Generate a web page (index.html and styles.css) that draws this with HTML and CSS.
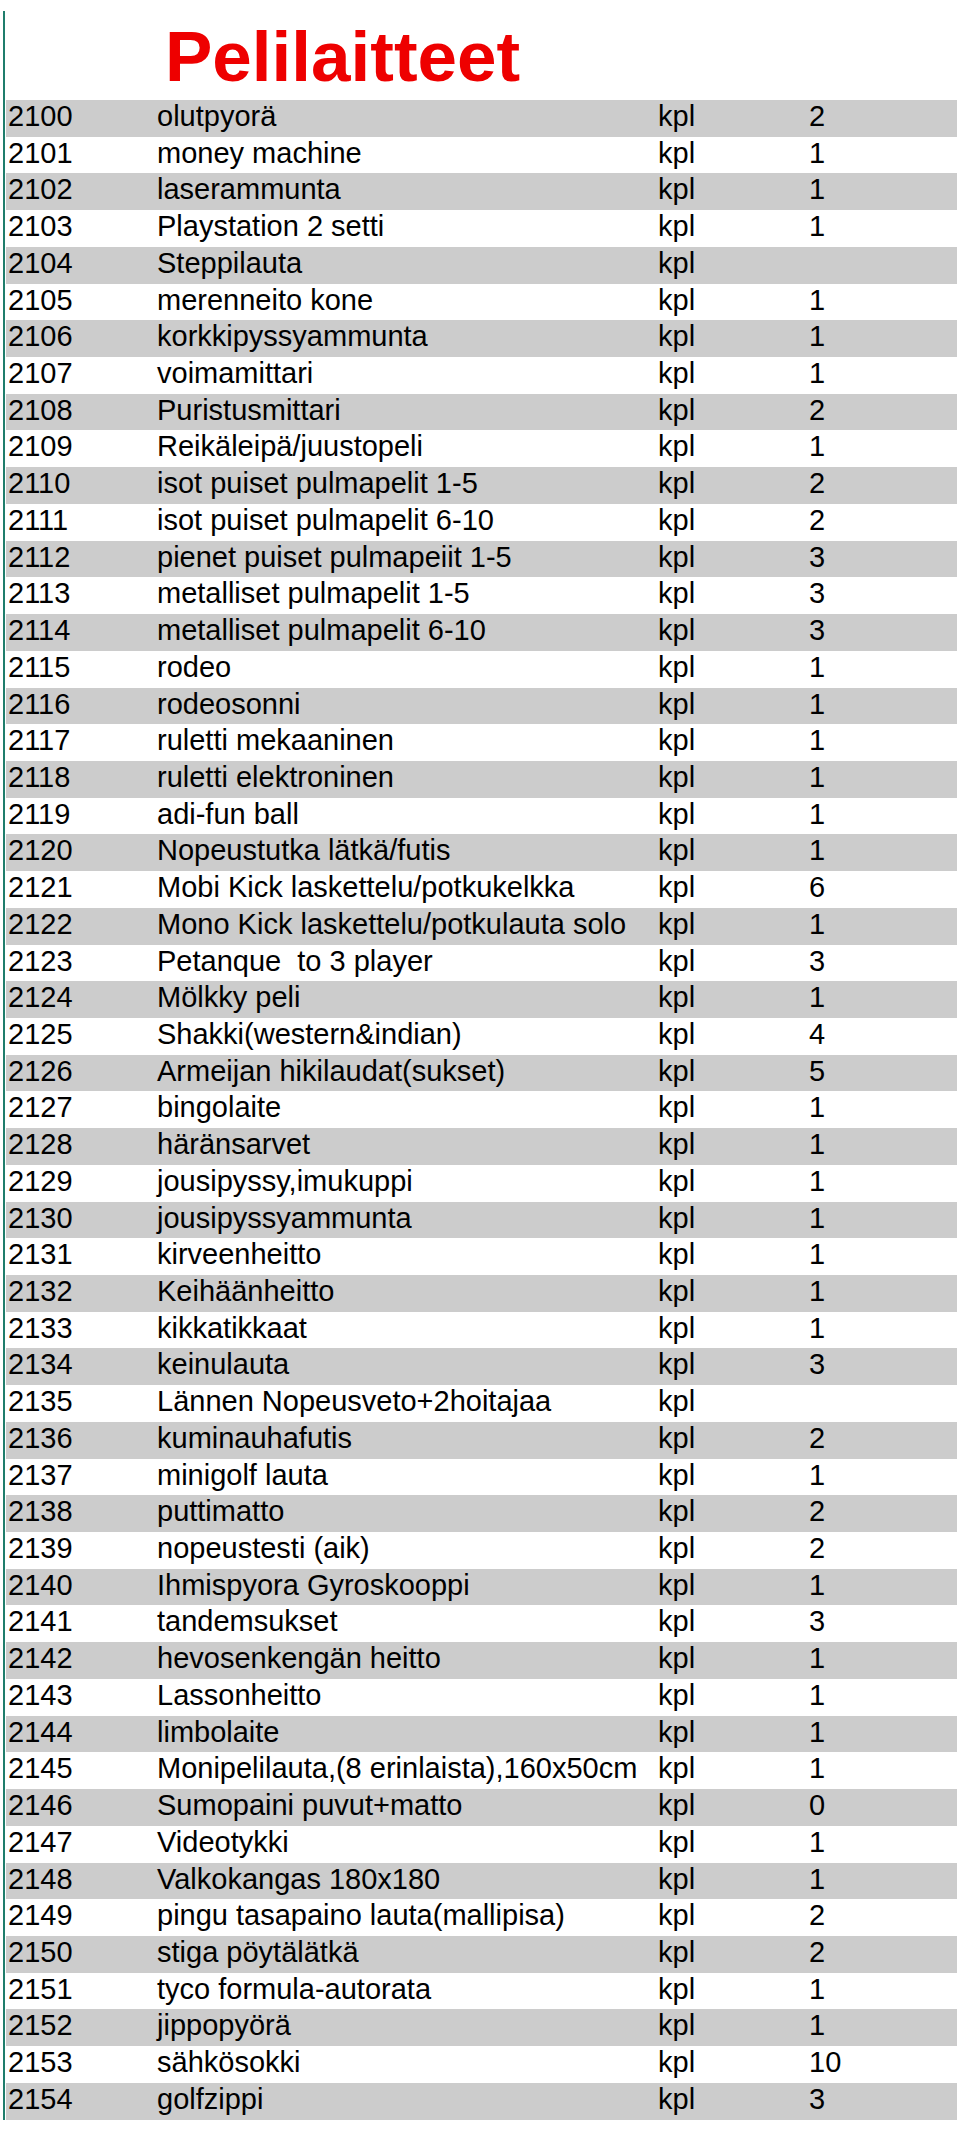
FILE: index.html
```html
<!DOCTYPE html>
<html lang="fi">
<head>
<meta charset="utf-8">
<title>Pelilaitteet</title>
<link rel="stylesheet" href="styles.css">
</head>
<body>
<div class="sheet">
  <h1 class="title">Pelilaitteet</h1>
  <div class="table">
    <div class="row"><span>2100</span><span>olutpyorä</span><span>kpl</span><span>2</span></div>
    <div class="row"><span>2101</span><span>money machine</span><span>kpl</span><span>1</span></div>
    <div class="row"><span>2102</span><span>laserammunta</span><span>kpl</span><span>1</span></div>
    <div class="row"><span>2103</span><span>Playstation 2 setti</span><span>kpl</span><span>1</span></div>
    <div class="row"><span>2104</span><span>Steppilauta</span><span>kpl</span><span></span></div>
    <div class="row"><span>2105</span><span>merenneito kone</span><span>kpl</span><span>1</span></div>
    <div class="row"><span>2106</span><span>korkkipyssyammunta</span><span>kpl</span><span>1</span></div>
    <div class="row"><span>2107</span><span>voimamittari</span><span>kpl</span><span>1</span></div>
    <div class="row"><span>2108</span><span>Puristusmittari</span><span>kpl</span><span>2</span></div>
    <div class="row"><span>2109</span><span>Reikäleipä/juustopeli</span><span>kpl</span><span>1</span></div>
    <div class="row"><span>2110</span><span>isot puiset pulmapelit 1-5</span><span>kpl</span><span>2</span></div>
    <div class="row"><span>2111</span><span>isot puiset pulmapelit 6-10</span><span>kpl</span><span>2</span></div>
    <div class="row"><span>2112</span><span>pienet puiset pulmapeiit 1-5</span><span>kpl</span><span>3</span></div>
    <div class="row"><span>2113</span><span>metalliset pulmapelit 1-5</span><span>kpl</span><span>3</span></div>
    <div class="row"><span>2114</span><span>metalliset pulmapelit 6-10</span><span>kpl</span><span>3</span></div>
    <div class="row"><span>2115</span><span>rodeo</span><span>kpl</span><span>1</span></div>
    <div class="row"><span>2116</span><span>rodeosonni</span><span>kpl</span><span>1</span></div>
    <div class="row"><span>2117</span><span>ruletti mekaaninen</span><span>kpl</span><span>1</span></div>
    <div class="row"><span>2118</span><span>ruletti elektroninen</span><span>kpl</span><span>1</span></div>
    <div class="row"><span>2119</span><span>adi-fun ball</span><span>kpl</span><span>1</span></div>
    <div class="row"><span>2120</span><span>Nopeustutka lätkä/futis</span><span>kpl</span><span>1</span></div>
    <div class="row"><span>2121</span><span>Mobi Kick laskettelu/potkukelkka</span><span>kpl</span><span>6</span></div>
    <div class="row"><span>2122</span><span>Mono Kick laskettelu/potkulauta solo</span><span>kpl</span><span>1</span></div>
    <div class="row"><span>2123</span><span>Petanque&nbsp; to 3 player</span><span>kpl</span><span>3</span></div>
    <div class="row"><span>2124</span><span>Mölkky peli</span><span>kpl</span><span>1</span></div>
    <div class="row"><span>2125</span><span>Shakki(western&amp;indian)</span><span>kpl</span><span>4</span></div>
    <div class="row"><span>2126</span><span>Armeijan hikilaudat(sukset)</span><span>kpl</span><span>5</span></div>
    <div class="row"><span>2127</span><span>bingolaite</span><span>kpl</span><span>1</span></div>
    <div class="row"><span>2128</span><span>häränsarvet</span><span>kpl</span><span>1</span></div>
    <div class="row"><span>2129</span><span>jousipyssy,imukuppi</span><span>kpl</span><span>1</span></div>
    <div class="row"><span>2130</span><span>jousipyssyammunta</span><span>kpl</span><span>1</span></div>
    <div class="row"><span>2131</span><span>kirveenheitto</span><span>kpl</span><span>1</span></div>
    <div class="row"><span>2132</span><span>Keihäänheitto</span><span>kpl</span><span>1</span></div>
    <div class="row"><span>2133</span><span>kikkatikkaat</span><span>kpl</span><span>1</span></div>
    <div class="row"><span>2134</span><span>keinulauta</span><span>kpl</span><span>3</span></div>
    <div class="row"><span>2135</span><span>Lännen Nopeusveto+2hoitajaa</span><span>kpl</span><span></span></div>
    <div class="row"><span>2136</span><span>kuminauhafutis</span><span>kpl</span><span>2</span></div>
    <div class="row"><span>2137</span><span>minigolf lauta</span><span>kpl</span><span>1</span></div>
    <div class="row"><span>2138</span><span>puttimatto</span><span>kpl</span><span>2</span></div>
    <div class="row"><span>2139</span><span>nopeustesti (aik)</span><span>kpl</span><span>2</span></div>
    <div class="row"><span>2140</span><span>Ihmispyora Gyroskooppi</span><span>kpl</span><span>1</span></div>
    <div class="row"><span>2141</span><span>tandemsukset</span><span>kpl</span><span>3</span></div>
    <div class="row"><span>2142</span><span>hevosenkengän heitto</span><span>kpl</span><span>1</span></div>
    <div class="row"><span>2143</span><span>Lassonheitto</span><span>kpl</span><span>1</span></div>
    <div class="row"><span>2144</span><span>limbolaite</span><span>kpl</span><span>1</span></div>
    <div class="row"><span>2145</span><span>Monipelilauta,(8 erinlaista),160x50cm</span><span>kpl</span><span>1</span></div>
    <div class="row"><span>2146</span><span>Sumopaini puvut+matto</span><span>kpl</span><span>0</span></div>
    <div class="row"><span>2147</span><span>Videotykki</span><span>kpl</span><span>1</span></div>
    <div class="row"><span>2148</span><span>Valkokangas 180x180</span><span>kpl</span><span>1</span></div>
    <div class="row"><span>2149</span><span>pingu tasapaino lauta(mallipisa)</span><span>kpl</span><span>2</span></div>
    <div class="row"><span>2150</span><span>stiga pöytälätkä</span><span>kpl</span><span>2</span></div>
    <div class="row"><span>2151</span><span>tyco formula-autorata</span><span>kpl</span><span>1</span></div>
    <div class="row"><span>2152</span><span>jippopyörä</span><span>kpl</span><span>1</span></div>
    <div class="row"><span>2153</span><span>sähkösokki</span><span>kpl</span><span>10</span></div>
    <div class="row"><span>2154</span><span>golfzippi</span><span>kpl</span><span>3</span></div>
  </div>
</div>
</body>
</html>
```
FILE: styles.css
```css
html, body {
  margin: 0;
  padding: 0;
  background: #ffffff;
}

body {
  font-family: "Liberation Sans", Arial, sans-serif;
  color: #000000;
}

.sheet {
  margin: 11px 0 0 3px;
  width: 951px;
  border-left: 2px solid #1f7d6c;
  padding-left: 1px;
}

.title {
  margin: 0;
  padding: 2px 0 0 159px;
  height: 87px;
  line-height: 87px;
  font-size: 71px;
  font-weight: bold;
  color: #ee0000;
  white-space: nowrap;
}

.table {
  display: flex;
  flex-direction: column;
}

.row {
  display: grid;
  grid-template-columns: 149px 501px 151px 1fr;
  padding-left: 2px;
  height: 36.727px;
  line-height: 33.4px;
  font-size: 29px;
  white-space: nowrap;
  background: #ffffff;
}

.row:nth-child(odd) {
  background: #cccccc;
}
```
